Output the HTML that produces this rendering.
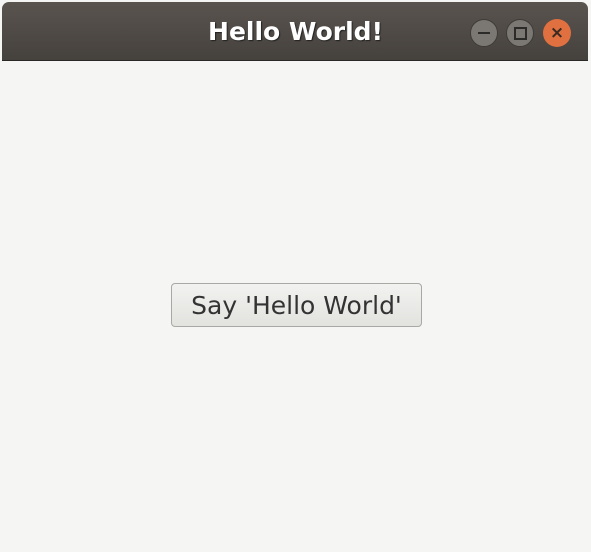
<!DOCTYPE html>
<html><head><style>
html,body{margin:0;padding:0;width:591px;height:552px;background:#f5f5f3;overflow:hidden;font-family:"DejaVu Sans","Liberation Sans",sans-serif;}
.tb{position:absolute;left:2px;top:2px;width:586px;height:58px;background:linear-gradient(#5a544f,#45413d);border-radius:7px 7px 0 0;border-bottom:1px solid #2a2826;}
.title{position:absolute;left:0;width:591px;top:17px;text-align:center;color:#fff;font-weight:bold;font-size:25px;text-shadow:1px 1px 1px #222;}
.c{position:absolute;top:19px;width:28px;height:28px;border-radius:50%;}
.btn{position:absolute;left:171px;top:283px;width:251px;height:44px;border:1px solid #a8a8a4;border-radius:4px;background:linear-gradient(#f2f2f0,#e2e2df);box-sizing:border-box;text-align:center;line-height:44px;font-size:25px;color:#333;}
</style></head><body>
<div class="tb"></div>
<div class="title">Hello World!</div>
<div class="c" style="left:470px;background:#7b7874;border:1px solid #3e3b38;box-sizing:border-box"><div style="position:absolute;left:7px;top:12px;width:12px;height:2px;background:#2d2b29"></div></div>
<div class="c" style="left:506px;background:#7b7874;border:1px solid #3e3b38;box-sizing:border-box"><div style="position:absolute;left:7px;top:7px;border:2px solid #2d2b29;width:9px;height:9px"></div></div>
<div class="c" style="left:543px;background:#e0703f;color:#3a2a22;text-align:center;line-height:28px;font-size:17px;font-weight:bold">×</div>
<div class="btn">Say 'Hello World'</div>
</body></html>
